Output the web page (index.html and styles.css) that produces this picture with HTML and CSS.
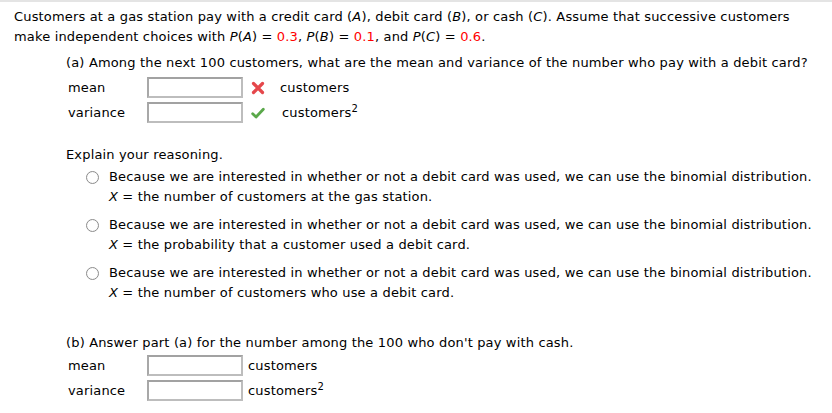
FILE: index.html
```html
<!DOCTYPE html>
<html lang="en">
<head>
    <meta charset="UTF-8">
    <title>Gas station payments</title>
    <link rel="stylesheet" href="styles.css">
</head>
<body>

<div class="question">
    <p class="intro">
        Customers at a gas station pay with a credit card (<i>A</i>), debit card (<i>B</i>), or cash (<i>C</i>). Assume that successive customers make independent choices with <i>P</i>(<i>A</i>) = <span class="num">0.3</span>, <i>P</i>(<i>B</i>) = <span class="num">0.1</span>, and <i>P</i>(<i>C</i>) = <span class="num">0.6</span>.
    </p>

    <!-- part (a) -->
    <div class="part">
        <p class="part-title">(a) Among the next 100 customers, what are the mean and variance of the number who pay with a debit card?</p>
        <div class="answer-row">
            <span class="label">mean</span>
            <input class="box" type="text">
            <span class="mark">
                <svg width="14" height="14" viewBox="0 0 14 14"><path d="M2.5 2.5 L11.5 11.5 M11.5 2.5 L2.5 11.5" stroke="#e5474b" stroke-width="3.2" stroke-linecap="round"/></svg>
            </span>
            <span class="unit">customers</span>
        </div>
        <div class="answer-row">
            <span class="label">variance</span>
            <input class="box" type="text">
            <span class="mark">
                <svg width="15" height="14" viewBox="0 0 15 14"><path d="M1.8 7.8 L5.4 11.2 L13.2 3" fill="none" stroke="#5aa84a" stroke-width="3" stroke-linecap="round" stroke-linejoin="round"/></svg>
            </span>
            <span class="unit unit-shift">customers<sup>2</sup></span>
        </div>

        <p class="explain">Explain your reasoning.</p>
        <ul class="choices">
            <li>
                <span class="radio"></span>
                <span>Because we are interested in whether or not a debit card was used, we can use the binomial distribution.<br><i>X</i> = the number of customers at the gas station.</span>
            </li>
            <li>
                <span class="radio"></span>
                <span>Because we are interested in whether or not a debit card was used, we can use the binomial distribution.<br><i>X</i> = the probability that a customer used a debit card.</span>
            </li>
            <li>
                <span class="radio"></span>
                <span>Because we are interested in whether or not a debit card was used, we can use the binomial distribution.<br><i>X</i> = the number of customers who use a debit card.</span>
            </li>
        </ul>
    </div>

    <!-- part (b) -->
    <div class="part part-b">
        <p class="part-title title-b">(b) Answer part (a) for the number among the 100 who don't pay with cash.</p>
        <div class="answer-row">
            <span class="label">mean</span>
            <input class="box" type="text">
            <span class="unit plain">customers</span>
        </div>
        <div class="answer-row">
            <span class="label">variance</span>
            <input class="box" type="text">
            <span class="unit plain">customers<sup>2</sup></span>
        </div>
    </div>
</div>

</body>
</html>
```

FILE: styles.css
```css
body {
    margin: 0;
    font-family: 'DejaVu Sans', Verdana, sans-serif;
    font-size: 13px;
    line-height: 20px;
    letter-spacing: 0.16px;
    color: #000000;
    background-color: #ffffff;
    border-top: 2px solid #e4e4e4;
}

.question {
    padding: 5px 14px 0 14px;
}

p {
    margin: 0;
}

.num {
    color: #ff0000;
}

.part {
    margin-top: 6px;
    padding-left: 52px;
}

.part-title {
    margin-bottom: 2px;
}

.title-b {
    margin-bottom: 0;
}

.answer-row {
    display: flex;
    align-items: center;
    height: 25px;
}

.label {
    width: 79px;
    padding-left: 2px;
}

.box {
    width: 96px;
    height: 21px;
    box-sizing: border-box;
    margin: 0;
    border: 2px solid #bdbdbd;
    border-top-color: #a2a2a2;
    border-left-color: #a8a8a8;
    background-color: #ffffff;
}

.mark {
    display: flex;
    width: 14px;
    margin-left: 8px;
    margin-right: 15px;
}

.unit-shift {
    margin-left: 2px;
}

.plain {
    margin-left: 5px;
}

sup {
    font-size: 10px;
    line-height: 0;
    vertical-align: 5px;
}

.explain {
    margin-top: 20px;
}

.choices {
    list-style: none;
    margin: 2px 0 0 0;
    padding: 0 0 0 20px;
}

.choices li {
    display: flex;
    align-items: flex-start;
    margin-bottom: 8px;
}

.radio {
    flex: none;
    width: 11px;
    height: 11px;
    margin: 4px 10px 0 0;
    border: 1px solid #8c8c8c;
    border-radius: 50%;
    background: radial-gradient(circle, #ffffff 55%, #ececec 100%);
}

.part-b {
    margin-top: 30px;
}
```
